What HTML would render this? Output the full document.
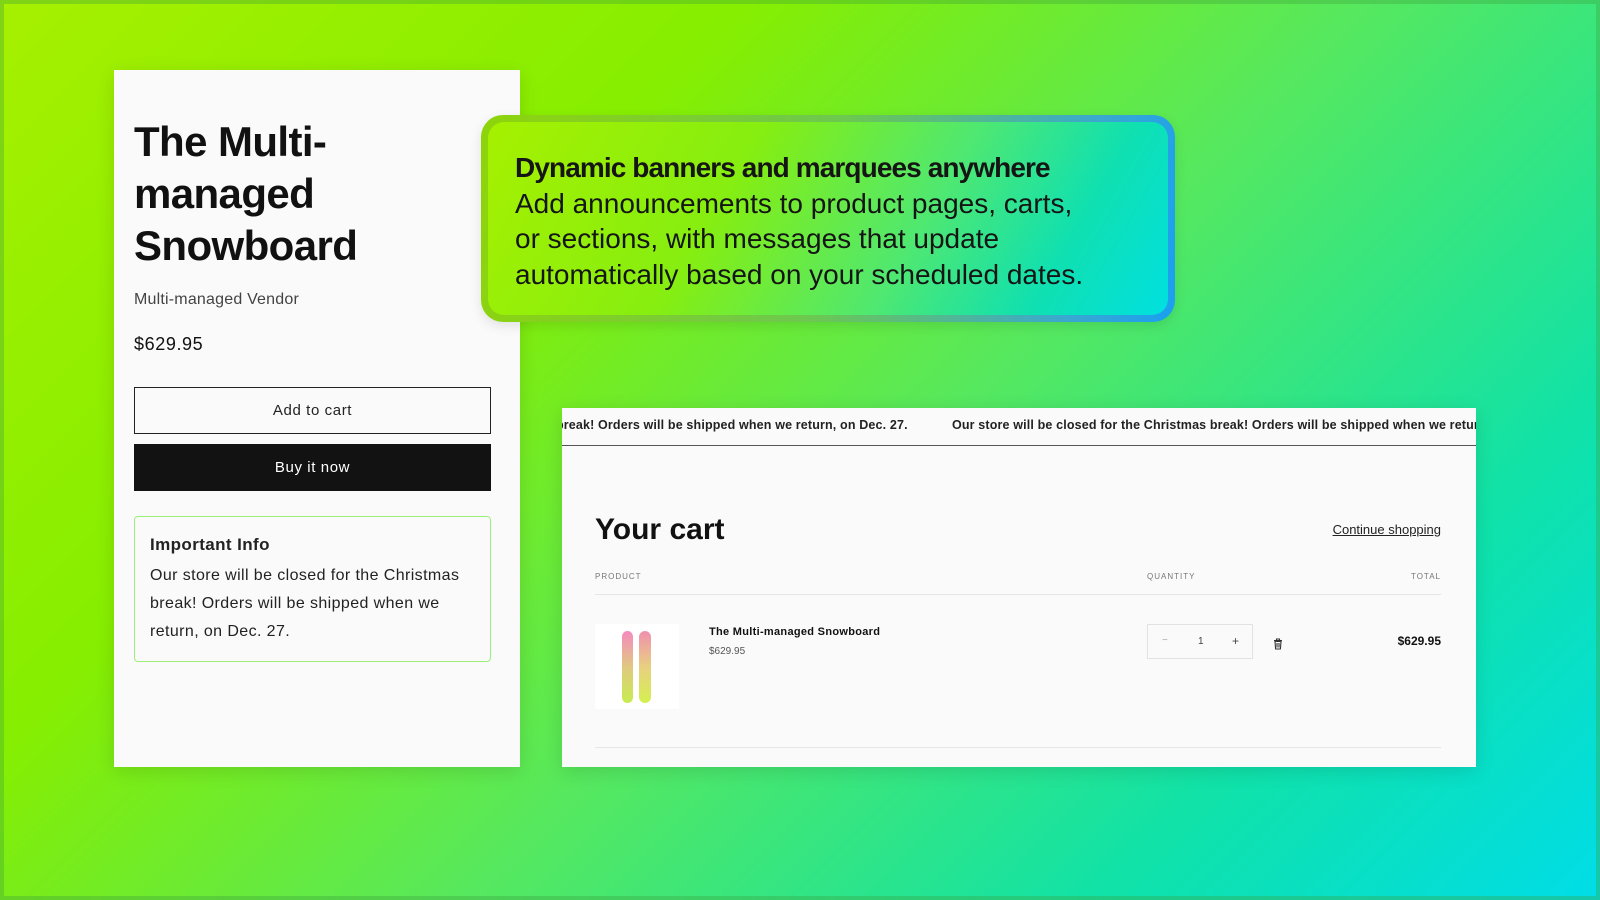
<!DOCTYPE html>
<html><head><meta charset="utf-8"><style>
*{box-sizing:border-box;margin:0;padding:0}
body{width:1600px;height:900px;overflow:hidden;font-family:"Liberation Sans",sans-serif;position:relative;
background:linear-gradient(135deg,#a6f000 0%,#86ee00 30%,#55e860 55%,#10e2a8 80%,#00dde8 100%);}
.frame{position:absolute;inset:0;border:4px solid rgba(60,160,60,0.35)}
.card{position:absolute;background:#fafafa;box-shadow:0 4px 18px rgba(0,0,0,0.12)}
.abs{position:absolute;white-space:nowrap}
</style></head><body>
<div class="frame"></div>
<div class="card" style="left:114px;top:70px;width:406px;height:697px">
  <div class="abs" style="left:20px;top:46px;font-size:42px;font-weight:bold;line-height:52px;color:#111;letter-spacing:-0.6px">The Multi-<br>managed<br>Snowboard</div>
  <div class="abs" style="left:20px;top:221px;font-size:16px;color:#444;letter-spacing:0.2px">Multi-managed Vendor</div>
  <div class="abs" style="left:20px;top:264px;font-size:18px;color:#111;letter-spacing:0.6px">$629.95</div>
  <div class="abs" style="left:20px;top:317px;width:357px;height:47px;border:1px solid #222;font-size:15px;text-align:center;line-height:45px;color:#222;letter-spacing:0.6px">Add to cart</div>
  <div class="abs" style="left:20px;top:374px;width:357px;height:47px;background:#121212;font-size:15px;text-align:center;line-height:47px;color:#fff;letter-spacing:0.6px">Buy it now</div>
  <div class="abs" style="left:20px;top:446px;width:357px;height:146px;border:1.5px solid #9cf07a;border-radius:4px;padding:18px 15px;white-space:normal;color:#222;font-size:16px;line-height:28px;letter-spacing:0.4px">
    <div style="font-weight:bold;font-size:17px;line-height:20px;margin-bottom:7px">Important Info</div>
    Our store will be closed for the Christmas break! Orders will be shipped when we return, on Dec. 27.
  </div>
</div>
<div class="abs" style="left:481px;top:115px;width:694px;height:207px;border-radius:22px;padding:7px;background:linear-gradient(100deg,#8fd40a,#6cc850 50%,#3aa8d0 85%,#1aa0f0);box-shadow:0 4px 12px rgba(0,0,0,0.1)">
  <div style="width:100%;height:100%;border-radius:16px;background:linear-gradient(120deg,#a6f000 0%,#86ee10 35%,#50e870 62%,#10e0b0 82%,#00e0e0 100%);"></div>
</div>
<div class="abs" style="left:515px;top:150px;font-size:28px;line-height:35.7px;color:#151515;letter-spacing:0px">
  <b style="letter-spacing:-0.9px">Dynamic banners and marquees anywhere</b><br>Add announcements to product pages, carts,<br>or sections, with messages that update<br>automatically based on your scheduled dates.
</div>
<div class="card" style="left:562px;top:408px;width:914px;height:359px;overflow:hidden">
  <div style="position:absolute;left:0;top:0;width:914px;height:38px;border-bottom:1.5px solid #555;overflow:hidden">
    <div class="abs" style="left:-6px;top:10px;font-size:12.5px;font-weight:bold;color:#222;letter-spacing:0.15px">break! Orders will be shipped when we return, on Dec. 27.</div>
    <div class="abs" style="left:390px;top:10px;font-size:12.5px;font-weight:bold;color:#222;letter-spacing:0.15px">Our store will be closed for the Christmas break! Orders will be shipped when we return, on Dec. 27.</div>
  </div>
  <div class="abs" style="left:33px;top:105px;font-size:30px;font-weight:bold;color:#111">Your cart</div>
  <div class="abs" style="right:35px;top:114px;font-size:13px;color:#222;text-decoration:underline">Continue shopping</div>
  <div class="abs" style="left:33px;top:164px;font-size:8px;color:#777;letter-spacing:1px">PRODUCT</div>
  <div class="abs" style="left:585px;top:164px;font-size:8px;color:#777;letter-spacing:1px">QUANTITY</div>
  <div class="abs" style="right:35px;top:164px;font-size:8px;color:#777;letter-spacing:1px">TOTAL</div>
  <div class="abs" style="left:33px;top:186px;width:846px;height:1px;background:#e6e6e6"></div>
  <div class="abs" style="left:33px;top:216px;width:84px;height:85px;background:#fff">
    <div style="position:absolute;left:27px;top:7px;width:11px;height:72px;border-radius:6px;background:linear-gradient(#f58ac0,#e0c880 50%,#c8ec50)"></div>
    <div style="position:absolute;left:44px;top:7px;width:12px;height:72px;border-radius:6px;background:linear-gradient(#f090b0,#e8d080 50%,#d4f050)"></div>
  </div>
  <div class="abs" style="left:147px;top:218px;font-size:11px;font-weight:bold;color:#111;letter-spacing:0.3px">The Multi-managed Snowboard</div>
  <div class="abs" style="left:147px;top:238px;font-size:10px;color:#555">$629.95</div>
  <div class="abs" style="left:585px;top:216px;width:106px;height:35px;border:1px solid #e2e2e2;font-size:10px;color:#444">
    <span class="abs" style="left:14px;top:10px;color:#aaa">−</span><span class="abs" style="left:50px;top:11px">1</span><span class="abs" style="left:84px;top:9px;font-size:12px">+</span>
  </div>
  <svg class="abs" style="left:711px;top:230px" width="10" height="12" viewBox="0 0 10 12"><path d="M1 2.5h8M3.5 2.5V1h3v1.5M2 3.5l.6 7.5h4.8l.6-7.5z M4 5v4.5M6 5v4.5" fill="none" stroke="#333" stroke-width="1.1"/></svg>
  <div class="abs" style="right:35px;top:226px;font-size:12px;font-weight:bold;color:#111">$629.95</div>
  <div class="abs" style="left:33px;top:339px;width:846px;height:1px;background:#e6e6e6"></div>
</div>
</body></html>
